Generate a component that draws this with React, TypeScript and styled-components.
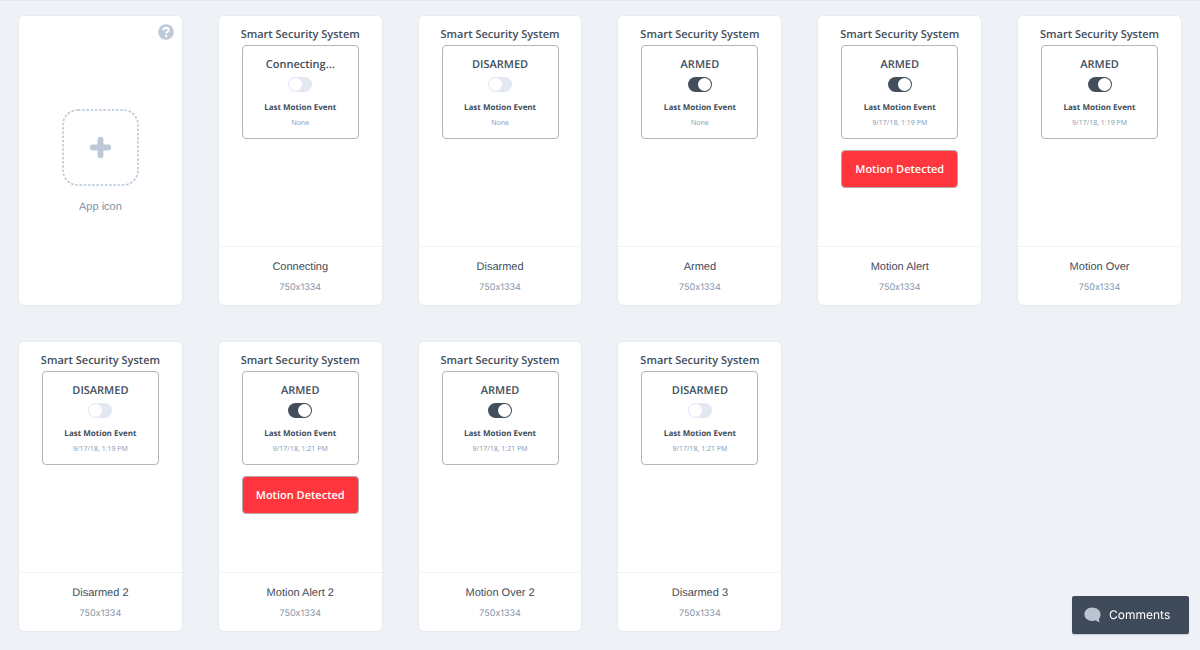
import React from "react";
import styled, { createGlobalStyle } from "styled-components";

const GlobalStyle = createGlobalStyle`
  *, *::before, *::after { box-sizing: border-box; }
  body {
    margin: 0;
    background: #eef2f7;
    color: #414d5a;
    font-family: "Liberation Sans", Arial, sans-serif;
    text-rendering: geometricPrecision;
  }
  button { text-rendering: inherit; }
  h2, h3, p { margin: 0; }
`;

const Page = styled.main`
  min-height: 100vh;
  border-top: 1px solid #e5e9ef;
  padding: 15px 19px 18px;
`;

const Grid = styled.div`
  display: grid;
  grid-template-columns: repeat(auto-fill, minmax(160px, 1fr));
  gap: 37px;
`;

const Card = styled.article`
  position: relative;
  display: flex;
  flex-direction: column;
  min-height: 289px;
  background: #fff;
  border-radius: 5px;
  box-shadow: 0 0 1px 1px #e6eaf0, 0 1px 1px rgba(60, 80, 110, 0.08);
`;

const Screen = styled.div`
  flex: 1;
  display: flex;
  flex-direction: column;
  align-items: center;
  min-height: 230px;
  padding-top: 11px;
  font-family: "Open Sans", "Noto Sans", sans-serif;
`;

const ScreenTitle = styled.h2`
  font-size: 11px;
  line-height: 16px;
  font-weight: 600;
  margin-bottom: 2px;
  white-space: nowrap;
`;

const Panel = styled.div`
  width: 117px;
  height: 94px;
  display: flex;
  flex-direction: column;
  align-items: center;
  padding-top: 11px;
  border: 1px solid #b5b5b7;
  border-radius: 4px;
`;

const Status = styled.label`
  display: flex;
  flex-direction: column;
  align-items: center;
  gap: 4px;
  font-size: 11px;
  line-height: 16px;
  font-weight: 600;
`;

const Toggle = styled.input`
  appearance: none;
  display: flex;
  width: 24px;
  height: 15px;
  margin: 0;
  padding: 1px;
  border-radius: 8px;
  background: #e3e8f2;

  &::before {
    content: "";
    width: 13px;
    height: 13px;
    border-radius: 50%;
    background: #fff;
  }

  &:checked {
    justify-content: flex-end;
    background: #434e5b;
  }
`;

const EventLabel = styled.h3`
  margin-top: 10px;
  font-size: 8px;
  line-height: 12px;
  font-weight: 700;
`;

const EventTime = styled.p`
  margin-top: 4px;
  font-size: 7px;
  line-height: 12px;
  color: #8897ad;
`;

const Alert = styled.button`
  width: 117px;
  height: 38px;
  margin-top: 11px;
  padding: 2px 0 0;
  border: 1px solid #b9a9ab;
  border-radius: 4px;
  background: #ff363d;
  color: #fff;
  font: 600 11px/16px "Open Sans", "Noto Sans", sans-serif;
`;

const Caption = styled.footer`
  height: 59px;
  padding-top: 12px;
  border-top: 1px solid #f1f2f5;
  text-align: center;
`;

const Name = styled.p`
  font-size: 11px;
  line-height: 16px;
`;

const Size = styled.p`
  margin-top: 6px;
  font-family: Inter, "Liberation Sans", sans-serif;
  font-size: 9px;
  line-height: 14px;
  font-variant-ligatures: no-contextual;
  color: #8594aa;
`;

const Help = styled.button`
  position: absolute;
  top: 8px;
  right: 8px;
  width: 16px;
  height: 16px;
  padding: 0;
  border: 0;
  background: none;
  svg { display: block; }
`;

const AddIcon = styled.button`
  display: flex;
  flex-direction: column;
  align-items: center;
  gap: 13px;
  margin: 93px auto 0;
  padding: 0;
  border: 0;
  background: none;
  color: #8091a7;
  font: 400 11px/16px "Liberation Sans", Arial, sans-serif;
`;

const Comments = styled.button`
  position: fixed;
  right: 11px;
  bottom: 16px;
  display: flex;
  align-items: center;
  gap: 8px;
  width: 117px;
  height: 38px;
  padding: 0 0 0 12px;
  border: 0;
  border-radius: 2px;
  background: #3e4a5a;
  box-shadow: 0 1px 1px rgba(60, 80, 110, 0.25);
  color: #fff;
  font: 400 12px/16px Inter, "Liberation Sans", sans-serif;
`;

interface ScreenData {
  name: string;
  status: string;
  event: string;
  armed?: boolean;
  alert?: boolean;
}

const screens: ScreenData[] = [
  { name: "Connecting", status: "Connecting...", event: "None" },
  { name: "Disarmed", status: "DISARMED", event: "None" },
  { name: "Armed", status: "ARMED", event: "None", armed: true },
  { name: "Motion Alert", status: "ARMED", event: "9/17/18, 1:19 PM", armed: true, alert: true },
  { name: "Motion Over", status: "ARMED", event: "9/17/18, 1:19 PM", armed: true },
  { name: "Disarmed 2", status: "DISARMED", event: "9/17/18, 1:19 PM" },
  { name: "Motion Alert 2", status: "ARMED", event: "9/17/18, 1:21 PM", armed: true, alert: true },
  { name: "Motion Over 2", status: "ARMED", event: "9/17/18, 1:21 PM", armed: true },
  { name: "Disarmed 3", status: "DISARMED", event: "9/17/18, 1:21 PM" },
];

function ScreenCard({ name, status, event, armed = false, alert }: ScreenData) {
  return (
    <Card>
      <Screen>
        <ScreenTitle>Smart Security System</ScreenTitle>
        <Panel>
          <Status>
            {status}
            <Toggle type="checkbox" defaultChecked={armed} />
          </Status>
          <EventLabel>Last Motion Event</EventLabel>
          <EventTime>{event}</EventTime>
        </Panel>
        {alert && <Alert type="button">Motion Detected</Alert>}
      </Screen>
      <Caption>
        <Name>{name}</Name>
        <Size>750x1334</Size>
      </Caption>
    </Card>
  );
}

export default function App() {
  return (
    <>
      <GlobalStyle />
      <Page>
        <Grid>
          <Card>
            <Help type="button" aria-label="Help">
              <svg width="16" height="16" viewBox="0 0 16 16" fill="none">
                <circle cx="8" cy="8" r="7.8" fill="#bdc9d8" />
                <path d="M5.3 6.2C5.3 4.6 6.4 3.7 8 3.7s2.700.9 2.700 2.200c0 1.700-2.500 1.700-2.500 3.700" stroke="#fff" strokeWidth="2.1" />
                <circle cx="8.1" cy="12" r="1.3" fill="#fff" />
              </svg>
            </Help>
            <AddIcon type="button">
              <svg width="77" height="77" viewBox="0 0 78 78" fill="none">
                <rect x="1" y="1" width="76" height="76" rx="15" stroke="#b6c7d6" strokeWidth="1.6" strokeDasharray="2.6 1.7" />
                <path d="M39 31.2v15.6M31.2 39h15.6" stroke="#bdc9d8" strokeWidth="6" strokeLinecap="round" />
              </svg>
              App icon
            </AddIcon>
          </Card>
          {screens.map((s) => (
            <ScreenCard key={s.name} {...s} />
          ))}
        </Grid>
      </Page>
      <Comments type="button">
        <svg width="17" height="16" viewBox="0 0 17 16">
          <path d="M8.2.4C3.8.4.4 3.3.4 7.2s3.4 6.7 7.8 6.7c1.3 0 2.6-.2 3.7-.6 1 1.1 2.2 1.7 3.9 1.8-.7-.9-1-2-.8-3.3 1-1.2 1.6-2.8 1.6-4.600C16.600 3.300 12.600.4 8.200.4z" fill="#bdc4d1" />
        </svg>
        Comments
      </Comments>
    </>
  );
}
